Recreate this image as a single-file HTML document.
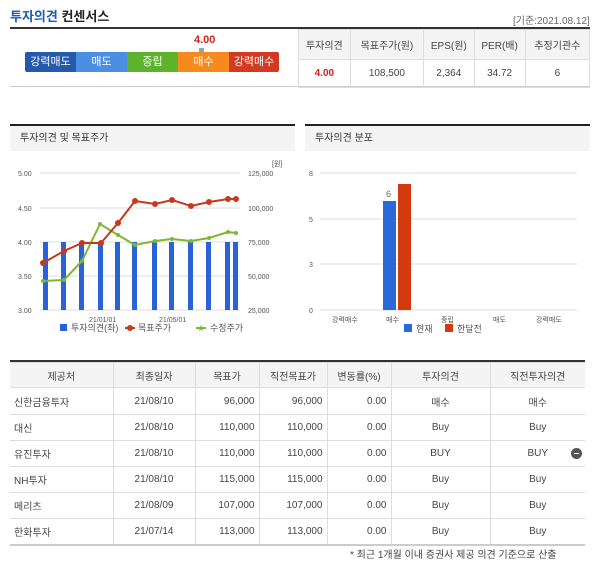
<!DOCTYPE html>
<html><head><meta charset="utf-8"><style>
*{margin:0;padding:0;box-sizing:border-box}
body{width:600px;height:551px;overflow:hidden;background:#fff;font-family:"Liberation Sans","Noto Sans CJK KR",sans-serif;color:#444;position:relative;font-size:10px}
.a{position:absolute}
table{border-collapse:collapse}
.tt td,.tt th{border:1px solid #ddd;text-align:center;font-weight:normal;font-size:10px;color:#444}
.tt th{background:#f4f4f4;color:#444}
.seg{position:absolute;top:0;height:20px;color:#fff;font-size:11px;text-align:center;line-height:20px}
.ph{background:#f4f4f4;border-top:2px solid #222;height:27px;line-height:25px;padding-left:10px;font-size:10px;color:#333}
</style></head><body>
<div class="a" style="left:10px;top:6px;font-size:13px;font-weight:bold"><span style="color:#1e5bb3">투자의견</span> <span style="color:#222">컨센서스</span></div>
<div class="a" style="left:513px;top:12px;font-size:10px;color:#666">[기준:2021.08.12]</div>
<div class="a" style="left:10px;top:27px;width:580px;height:2px;background:#333"></div>
<div class="a" style="left:10px;top:86px;width:580px;height:1px;background:#ccc"></div>
<div class="a" style="left:194px;top:34px;color:#d0201c;font-weight:bold;font-size:11px">4.00</div>
<div class="a" style="left:199px;top:48px;width:5px;height:5px;background:#8aa;border-radius:1px"></div>
<div class="a" style="left:25px;top:52px;width:254px;height:20px;border-radius:2px;overflow:hidden">
<div class="seg" style="left:0;width:51px;background:#2459ab">강력매도</div>
<div class="seg" style="left:51px;width:51px;background:#4b8ee2">매도</div>
<div class="seg" style="left:102px;width:51px;background:#5eb32c">중립</div>
<div class="seg" style="left:153px;width:51px;background:#f78a1f">매수</div>
<div class="seg" style="left:204px;width:50px;background:#d23a22">강력매수</div>
</div>
<table class="tt a" style="left:298px;top:29px;width:292px">
<tr style="height:30px"><th style="border-left:1px solid #ddd">투자의견</th><th>목표주가(원)</th><th>EPS(원)</th><th>PER(배)</th><th>추정기관수</th></tr>
<tr style="height:28px"><td style="color:#d0201c;font-weight:bold">4.00</td><td>108,500</td><td>2,364</td><td>34.72</td><td>6</td></tr>
</table>

<div class="a ph" style="left:10px;top:124px;width:285px">투자의견 및 목표주가</div>
<div class="a ph" style="left:305px;top:124px;width:285px">투자의견 분포</div>

<svg class="a" style="left:0;top:152px" width="300" height="190" font-family="Liberation Sans" font-size="7" fill="#555">
<g stroke="#ddd" stroke-width="1"><line x1="40" y1="21" x2="240" y2="21"/><line x1="40" y1="56" x2="240" y2="56"/><line x1="40" y1="90" x2="240" y2="90"/><line x1="40" y1="124" x2="240" y2="124"/><line x1="40" y1="158" x2="240" y2="158"/></g>
<text x="18" y="24">5.00</text><text x="18" y="59">4.50</text><text x="18" y="93">4.00</text><text x="18" y="127">3.50</text><text x="18" y="161">3.00</text>
<text x="248" y="24">125,000</text><text x="248" y="59">100,000</text><text x="248" y="93">75,000</text><text x="248" y="127">50,000</text><text x="248" y="161">25,000</text>
<text x="272" y="14">[원]</text>
<g fill="#2a62d8"><rect x="43" y="90" width="5" height="68"/><rect x="61" y="90" width="5" height="68"/><rect x="79" y="90" width="5" height="68"/><rect x="98" y="90" width="5" height="68"/><rect x="115" y="90" width="5" height="68"/><rect x="132" y="90" width="5" height="68"/><rect x="152" y="90" width="5" height="68"/><rect x="169" y="90" width="5" height="68"/><rect x="188" y="90" width="5" height="68"/><rect x="206" y="90" width="5" height="68"/><rect x="225" y="90" width="5" height="68"/><rect x="233" y="90" width="5" height="68"/></g>
<polyline fill="none" stroke="#7cb82f" stroke-width="2" points="43,129 64,128 82,109 100,72 118,83 135,93 155,89 172,87 191,89 209,86 228,80 236,81"/>
<g fill="#7cb82f"><circle cx="43" cy="129" r="2"/><circle cx="64" cy="128" r="2"/><circle cx="82" cy="109" r="2"/><circle cx="100" cy="72" r="2"/><circle cx="118" cy="83" r="2"/><circle cx="135" cy="93" r="2"/><circle cx="155" cy="89" r="2"/><circle cx="172" cy="87" r="2"/><circle cx="191" cy="89" r="2"/><circle cx="209" cy="86" r="2"/><circle cx="228" cy="80" r="2"/><circle cx="236" cy="81" r="2"/></g>
<polyline fill="none" stroke="#c8381c" stroke-width="2" points="43,111 64,99 82,91 101,91 118,71 135,49 155,52 172,48 191,54 209,50 228,47 236,47"/>
<g fill="#c8381c"><circle cx="43" cy="111" r="3"/><circle cx="64" cy="99" r="3"/><circle cx="82" cy="91" r="3"/><circle cx="101" cy="91" r="3"/><circle cx="118" cy="71" r="3"/><circle cx="135" cy="49" r="3"/><circle cx="155" cy="52" r="3"/><circle cx="172" cy="48" r="3"/><circle cx="191" cy="54" r="3"/><circle cx="209" cy="50" r="3"/><circle cx="228" cy="47" r="3"/><circle cx="236" cy="47" r="3"/></g>
<text x="89" y="170">21/01/01</text><text x="159" y="170">21/05/01</text>
<rect x="60" y="172" width="7" height="7" fill="#2a62d8"/><text x="71" y="179" font-size="9">투자의견(좌)</text>
<line x1="125" y1="176" x2="135" y2="176" stroke="#c8381c" stroke-width="2"/><circle cx="130" cy="176" r="3" fill="#c8381c"/><text x="138" y="179" font-size="9">목표주가</text>
<line x1="196" y1="176" x2="206" y2="176" stroke="#7cb82f" stroke-width="2"/><text x="201" y="179" font-size="9" fill="#7cb82f" text-anchor="middle">★</text><text x="210" y="179" font-size="9">수정주가</text>
</svg>

<svg class="a" style="left:300px;top:152px" width="300" height="190" font-family="Liberation Sans" font-size="7" fill="#555">
<g stroke="#ddd"><line x1="20" y1="21" x2="277" y2="21"/><line x1="20" y1="67" x2="277" y2="67"/><line x1="20" y1="112" x2="277" y2="112"/><line x1="20" y1="158" x2="277" y2="158"/></g>
<text x="9" y="24">8</text><text x="9" y="70">5</text><text x="9" y="115">3</text><text x="9" y="161">0</text>
<rect x="83" y="49" width="13" height="109" fill="#2a6ad8"/><rect x="98" y="32" width="13" height="126" fill="#d43a10"/>
<text x="86" y="45" font-size="9" fill="#666">6</text>
<text x="32" y="170">강력매수</text><text x="86" y="170">매수</text><text x="141" y="170">중립</text><text x="193" y="170">매도</text><text x="236" y="170">강력매도</text>
<rect x="104" y="172" width="8" height="8" fill="#2a6ad8"/><text x="116" y="180" font-size="9">현재</text>
<rect x="145" y="172" width="8" height="8" fill="#d43a10"/><text x="157" y="180" font-size="9">한달전</text>
</svg>

<div class="a" style="left:10px;top:360px;width:575px;height:2px;background:#333"></div>
<table class="tt a" style="left:10px;top:362px;width:575px;border-bottom:2px solid #ccc">
<colgroup><col style="width:103px"><col style="width:82px"><col style="width:64px"><col style="width:68px"><col style="width:64px"><col style="width:99px"><col></colgroup>
<tr style="height:25px"><th style="border-left:none">제공처</th><th>최종일자</th><th>목표가</th><th>직전목표가</th><th>변동률(%)</th><th>투자의견</th><th style="border-right:none">직전투자의견</th></tr>
<tr style="height:27px"><td style="text-align:left;padding-left:4px;border-left:none">신한금융투자</td><td>21/08/10</td><td style="text-align:right;padding-right:4px">96,000</td><td style="text-align:right;padding-right:4px">96,000</td><td style="text-align:right;padding-right:4px">0.00</td><td>매수</td><td style="border-right:none">매수</td></tr>
<tr style="height:26px"><td style="text-align:left;padding-left:4px;border-left:none">대신</td><td>21/08/10</td><td style="text-align:right;padding-right:4px">110,000</td><td style="text-align:right;padding-right:4px">110,000</td><td style="text-align:right;padding-right:4px">0.00</td><td>Buy</td><td style="border-right:none">Buy</td></tr>
<tr style="height:26px"><td style="text-align:left;padding-left:4px;border-left:none">유진투자</td><td>21/08/10</td><td style="text-align:right;padding-right:4px">110,000</td><td style="text-align:right;padding-right:4px">110,000</td><td style="text-align:right;padding-right:4px">0.00</td><td>BUY</td><td style="border-right:none;position:relative">BUY<span style="position:absolute;right:3px;top:7px;width:11px;height:11px;border-radius:50%;background:#555"><span style="position:absolute;left:3px;top:5px;width:5px;height:1px;background:#fff"></span></span></td></tr>
<tr style="height:26px"><td style="text-align:left;padding-left:4px;border-left:none">NH투자</td><td>21/08/10</td><td style="text-align:right;padding-right:4px">115,000</td><td style="text-align:right;padding-right:4px">115,000</td><td style="text-align:right;padding-right:4px">0.00</td><td>Buy</td><td style="border-right:none">Buy</td></tr>
<tr style="height:26px"><td style="text-align:left;padding-left:4px;border-left:none">메리츠</td><td>21/08/09</td><td style="text-align:right;padding-right:4px">107,000</td><td style="text-align:right;padding-right:4px">107,000</td><td style="text-align:right;padding-right:4px">0.00</td><td>Buy</td><td style="border-right:none">Buy</td></tr>
<tr style="height:26px"><td style="text-align:left;padding-left:4px;border-left:none">한화투자</td><td>21/07/14</td><td style="text-align:right;padding-right:4px">113,000</td><td style="text-align:right;padding-right:4px">113,000</td><td style="text-align:right;padding-right:4px">0.00</td><td>Buy</td><td style="border-right:none">Buy</td></tr>
</table>
<div class="a" style="left:350px;top:546px;font-size:10px;color:#444;white-space:nowrap">* 최근 1개월 이내 증권사 제공 의견 기준으로 산출</div>
</body></html>
